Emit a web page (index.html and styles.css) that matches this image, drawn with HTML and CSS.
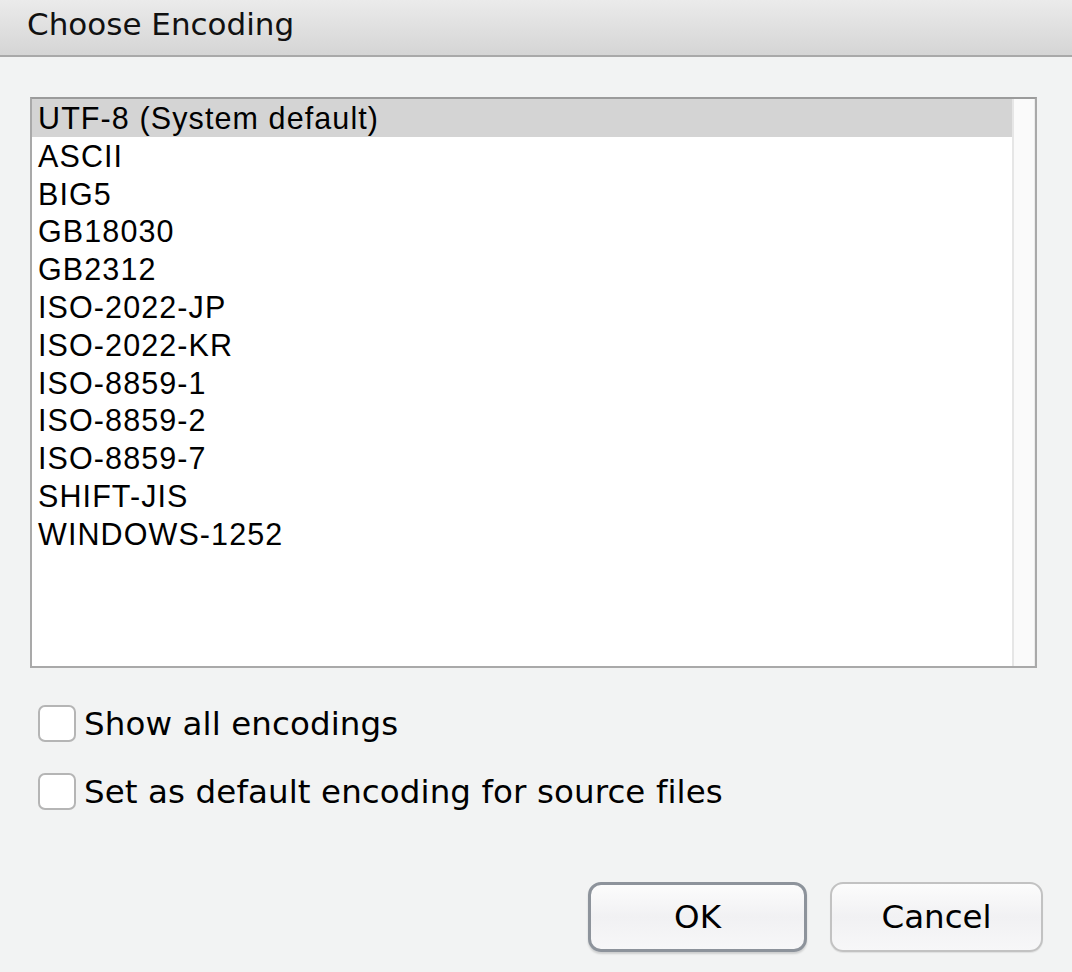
FILE: index.html
```html
<!DOCTYPE html>
<html>
<head>
<meta charset="utf-8">
<title>Choose Encoding</title>
<link rel="stylesheet" href="styles.css">
</head>
<body>
<div class="dialog">
  <div class="titlebar">Choose Encoding</div>
  <div class="content">
    <div class="listbox">
      <ul class="items">
        <li class="item selected">UTF-8 (System default)</li>
        <li class="item">ASCII</li>
        <li class="item">BIG5</li>
        <li class="item">GB18030</li>
        <li class="item">GB2312</li>
        <li class="item">ISO-2022-JP</li>
        <li class="item">ISO-2022-KR</li>
        <li class="item">ISO-8859-1</li>
        <li class="item">ISO-8859-2</li>
        <li class="item">ISO-8859-7</li>
        <li class="item">SHIFT-JIS</li>
        <li class="item">WINDOWS-1252</li>
      </ul>
      <div class="scrolltrack"></div>
    </div>
    <div class="options">
      <label class="option"><span class="checkbox"></span><span class="label">Show all encodings</span></label>
      <label class="option"><span class="checkbox"></span><span class="label">Set as default encoding for source files</span></label>
    </div>
    <div class="buttons">
      <button class="btn btn-default">OK</button>
      <button class="btn">Cancel</button>
    </div>
  </div>
</div>
</body>
</html>
```

FILE: styles.css
```css
html, body {
  margin: 0;
  padding: 0;
  background: #f2f3f3;
}
.dialog {
  width: 1072px;
  height: 972px;
  display: flex;
  flex-direction: column;
  background: #f2f3f3;
  overflow: hidden;
}
.titlebar {
  height: 57px;
  box-sizing: border-box;
  padding-left: 27px;
  padding-top: 4px;
  font-family: "DejaVu Sans", sans-serif;
  font-size: 31px;
  color: #111;
  background: linear-gradient(#ebebeb, #d5d5d5);
  border-bottom: 2px solid #a9a9a9;
  line-height: 40px;
}
.content {
  display: flex;
  flex-direction: column;
  padding: 40px 29px 0 30px;
}
.listbox {
  width: 1007px;
  height: 571px;
  box-sizing: border-box;
  border: 2px solid #a9a9a9;
  border-top-color: #9b9b9b;
  background: #fff;
  display: flex;
}
.items {
  list-style: none;
  margin: 0;
  padding: 0;
  flex: 1;
}
.item {
  height: 37.8px;
  line-height: 38px;
  padding-left: 6px;
  font-family: "Liberation Sans", Arial, sans-serif;
  font-size: 30.5px;
  letter-spacing: 1.1px;
  color: #000;
  white-space: nowrap;
}
.item.selected {
  background: #d4d4d4;
}
.scrolltrack {
  width: 20px;
  background: #fafafa;
  border-left: 2px solid #e6e6e6;
  border-right: 1px solid #ececec;
}
.options {
  display: flex;
  flex-direction: column;
  gap: 31px;
  margin-top: 37px;
  padding-left: 8px;
}
.option {
  display: flex;
  align-items: center;
  gap: 8px;
  height: 37px;
}
.checkbox {
  width: 38px;
  height: 37px;
  box-sizing: border-box;
  border: 2px solid #b5b5b5;
  border-radius: 7px;
  background: #fff;
  flex: none;
}
.label {
  font-family: "DejaVu Sans", sans-serif;
  font-size: 32.5px;
  letter-spacing: 0.1px;
  color: #000;
  white-space: nowrap;
}
.buttons {
  display: flex;
  justify-content: flex-end;
  gap: 23px;
  margin-top: 72px;
}
.btn {
  width: 213px;
  height: 70px;
  box-sizing: border-box;
  border: 2px solid #c2c2c2;
  border-radius: 13px;
  background: linear-gradient(#fcfcfc, #f1f1f3 50%, #f7f7f8);
  font-family: "DejaVu Sans", sans-serif;
  font-size: 32.5px;
  color: #000;
  padding: 0;
  box-shadow: 0 1px 1px rgba(0,0,0,0.08);
}
.btn-default {
  width: 219px;
  border: 3px solid #8d939b;
  box-shadow: 0 2px 2px rgba(0,0,0,0.15);
}
```
